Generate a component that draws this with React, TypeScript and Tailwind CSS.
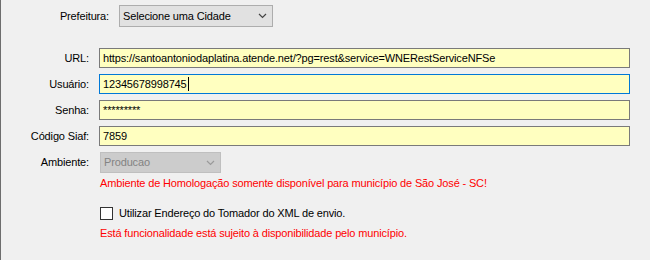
import React from 'react';

const Chevron = ({ color }: { color: string }) => (
  <svg width="9" height="6" viewBox="0 0 9 6" className="shrink-0">
    <path d="M1 1l3.5 3.5L8 1" fill="none" stroke={color} strokeWidth="1.2" />
  </svg>
);

const fields = [
  { label: 'URL:', value: 'https://santoantoniodaplatina.atende.net/?pg=rest&service=WNERestServiceNFSe' },
  { label: 'Usuário:', value: '12345678998745', focused: true },
  { label: 'Senha:', value: '*********' },
  { label: 'Código Siaf:', value: '7859' },
];

export default function App() {
  return (
    <div
      className="h-[260px] w-[650px] overflow-hidden border-l border-[#6d6d6d] bg-[#f0f0f0] text-[11px] leading-[13px] tracking-[-0.15px] text-black"
      style={{ fontFamily: '"Liberation Sans", Arial, sans-serif' }}
    >
      <div className="flex items-center pt-[5px]">
        <div className="w-[108px] text-right">Prefeitura:</div>
        <div className="ml-[10px] flex h-[22px] w-[154px] items-center justify-between border border-[#adadad] bg-[#e1e1e1] pl-[3px] pr-[5px]">
          <span>Selecione uma Cidade</span>
          <Chevron color="#444" />
        </div>
      </div>

      <div className="mt-[21px] flex flex-col gap-[6px]">
        {fields.map((f) => (
          <div key={f.label} className="flex items-center">
            <div className="w-[88px] text-right">{f.label}</div>
            <div
              className={
                'ml-[10px] flex h-[20px] w-[531px] items-center border bg-[#ffffc0] pl-[3px] ' +
                (f.focused ? 'border-[#0078d7]' : 'border-[#7a7a7a]')
              }
            >
              <span>{f.value}</span>
              {f.focused ? <span className="ml-px h-[14px] w-px bg-black" /> : null}
            </div>
          </div>
        ))}
      </div>

      <div className="mt-[6px] flex items-center">
        <div className="w-[88px] text-right">Ambiente:</div>
        <div className="ml-[11px] flex h-[21px] w-[121px] items-center justify-between border border-[#bfbfbf] bg-[#cccccc] pl-[3px] pr-[5px] text-[#838383]">
          <span>Producao</span>
          <Chevron color="#9a9a9a" />
        </div>
      </div>

      <div className="ml-[99px] mt-[4px] text-[#ff0000]">
        Ambiente de Homologação somente disponível para município de São José - SC!
      </div>

      <div className="ml-[99px] mt-[17px] flex items-center">
        <span className="h-[13px] w-[13px] border border-[#333] bg-white" />
        <span className="ml-[6px]">Utilizar Endereço do Tomador do XML de envio.</span>
      </div>

      <div className="ml-[99px] mt-[7px] text-[#ff0000]">
        Está funcionalidade está sujeito à disponibilidade pelo município.
      </div>
    </div>
  );
}
